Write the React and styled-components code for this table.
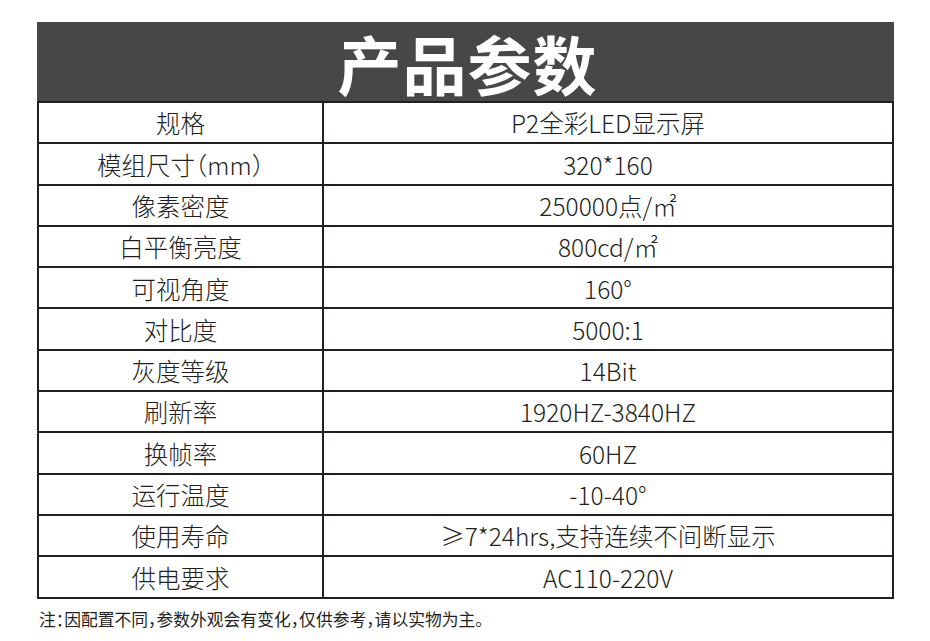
import React from "react";
import styled, { createGlobalStyle } from "styled-components";

const GlobalStyle = createGlobalStyle`
  html, body {
    margin: 0;
    padding: 0;
    background: #ffffff;
  }
  body {
    font-family: "Noto Sans CJK SC", "Noto Sans", sans-serif;
    color: #231f20;
  }
`;

const Page = styled.div`
  width: 930px;
  height: 641px;
  padding: 22px 0 0 37px;
  box-sizing: border-box;
`;

const Sheet = styled.div`
  width: 857px;
  display: flex;
  flex-direction: column;
`;

const Banner = styled.div`
  height: 79px;
  background: #474747;
  color: #ffffff;
  display: flex;
  align-items: center;
  justify-content: center;
  font-size: 64px;
  font-weight: 700;
  letter-spacing: 1px;
  line-height: 1;
  padding-left: 4px;
`;

const Table = styled.div`
  border: 2px solid #231f20;
  border-bottom: none;
  display: flex;
  flex-direction: column;
`;

const Row = styled.div`
  display: grid;
  grid-template-columns: 283px 1fr;
  height: 41.3px;
  box-sizing: border-box;
  border-bottom: 2px solid #231f20;
`;

const Cell = styled.div`
  display: flex;
  align-items: center;
  justify-content: center;
  font-size: 24.5px;
  font-weight: 300;
  line-height: 1;
  padding-top: 2px;
  white-space: nowrap;
  font-feature-settings: "halt";
  border-left: ${(p) => (p.$divider ? "2px solid #231f20" : "none")};
`;

const Note = styled.div`
  margin-top: 8px;
  font-size: 16.8px;
  font-weight: 400;
  color: #231f20;
  padding-left: 2px;
  font-feature-settings: "halt";
`;

const specs = [
  ["规格", "P2全彩LED显示屏"],
  ["模组尺寸（mm）", "320*160"],
  ["像素密度", "250000点/㎡"],
  ["白平衡亮度", "800cd/㎡"],
  ["可视角度", "160°"],
  ["对比度", "5000:1"],
  ["灰度等级", "14Bit"],
  ["刷新率", "1920HZ-3840HZ"],
  ["换帧率", "60HZ"],
  ["运行温度", "-10-40°"],
  ["使用寿命", "≥7*24hrs,支持连续不间断显示"],
  ["供电要求", "AC110-220V"],
];

export default function App() {
  return (
    <>
      <GlobalStyle />
      <Page>
        <Sheet>
          <Banner>产品参数</Banner>
          <Table>
            {specs.map(([label, value]) => (
              <Row key={label}>
                <Cell>{label}</Cell>
                <Cell $divider>{value}</Cell>
              </Row>
            ))}
          </Table>
          <Note>注：因配置不同，参数外观会有变化，仅供参考，请以实物为主。</Note>
        </Sheet>
      </Page>
    </>
  );
}
